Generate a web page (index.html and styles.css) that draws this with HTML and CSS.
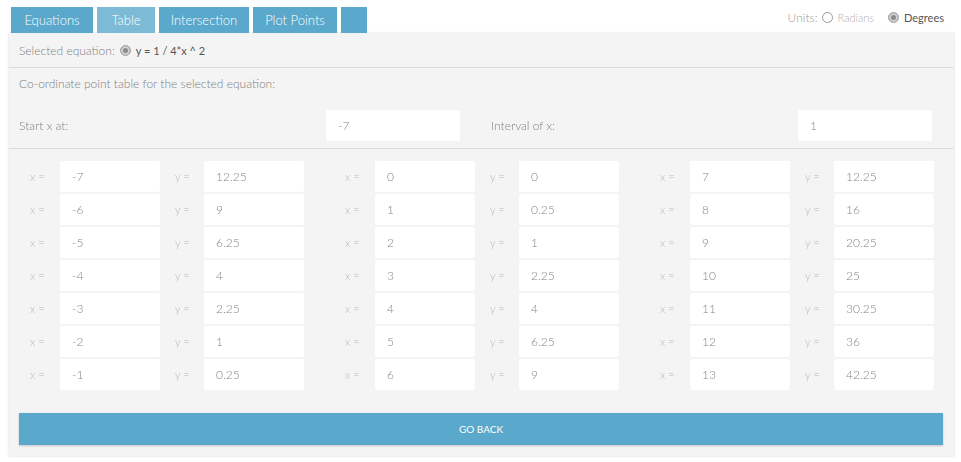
FILE: index.html
```html
<!DOCTYPE html>
<html>
<head>
<meta charset="utf-8">
<link rel="stylesheet" href="styles.css">
</head>
<body>
<div class="page">
  <div class="topbar">
    <div class="tabs">
      <div class="tab">Equations</div>
      <div class="tab active">Table</div>
      <div class="tab">Intersection</div>
      <div class="tab">Plot Points</div>
      <div class="tab blank"></div>
    </div>
    <div class="units">
      <span class="units-label">Units:</span>
      <span class="radio"></span><span class="opt">Radians</span>
      <span class="radio checked"></span><span class="opt sel">Degrees</span>
    </div>
  </div>
  <div class="panel">
    <div class="section eq-row">
      <span class="muted">Selected equation:</span>
      <span class="radio checked"></span>
      <span class="eq">y = 1 / 4*x ^ 2</span>
    </div>
    <div class="section settings">
      <div class="caption">Co-ordinate point table for the selected equation:</div>
      <div class="halves">
        <div class="half first">
          <span class="muted">Start x at:</span>
          <div class="field wide">-7</div>
        </div>
        <div class="half second">
          <span class="muted">Interval of x:</span>
          <div class="field wide">1</div>
        </div>
      </div>
    </div>
    <div class="section points">
      <div class="grid">
        <div class="col">
          <div class="pair"><span class="lbl">x =</span><div class="field">-7</div><span class="lbl y">y =</span><div class="field">12.25</div></div>
          <div class="pair"><span class="lbl">x =</span><div class="field">-6</div><span class="lbl y">y =</span><div class="field">9</div></div>
          <div class="pair"><span class="lbl">x =</span><div class="field">-5</div><span class="lbl y">y =</span><div class="field">6.25</div></div>
          <div class="pair"><span class="lbl">x =</span><div class="field">-4</div><span class="lbl y">y =</span><div class="field">4</div></div>
          <div class="pair"><span class="lbl">x =</span><div class="field">-3</div><span class="lbl y">y =</span><div class="field">2.25</div></div>
          <div class="pair"><span class="lbl">x =</span><div class="field">-2</div><span class="lbl y">y =</span><div class="field">1</div></div>
          <div class="pair"><span class="lbl">x =</span><div class="field">-1</div><span class="lbl y">y =</span><div class="field">0.25</div></div>
        </div>
        <div class="col">
          <div class="pair"><span class="lbl">x =</span><div class="field">0</div><span class="lbl y">y =</span><div class="field">0</div></div>
          <div class="pair"><span class="lbl">x =</span><div class="field">1</div><span class="lbl y">y =</span><div class="field">0.25</div></div>
          <div class="pair"><span class="lbl">x =</span><div class="field">2</div><span class="lbl y">y =</span><div class="field">1</div></div>
          <div class="pair"><span class="lbl">x =</span><div class="field">3</div><span class="lbl y">y =</span><div class="field">2.25</div></div>
          <div class="pair"><span class="lbl">x =</span><div class="field">4</div><span class="lbl y">y =</span><div class="field">4</div></div>
          <div class="pair"><span class="lbl">x =</span><div class="field">5</div><span class="lbl y">y =</span><div class="field">6.25</div></div>
          <div class="pair"><span class="lbl">x =</span><div class="field">6</div><span class="lbl y">y =</span><div class="field">9</div></div>
        </div>
        <div class="col">
          <div class="pair"><span class="lbl">x =</span><div class="field">7</div><span class="lbl y">y =</span><div class="field">12.25</div></div>
          <div class="pair"><span class="lbl">x =</span><div class="field">8</div><span class="lbl y">y =</span><div class="field">16</div></div>
          <div class="pair"><span class="lbl">x =</span><div class="field">9</div><span class="lbl y">y =</span><div class="field">20.25</div></div>
          <div class="pair"><span class="lbl">x =</span><div class="field">10</div><span class="lbl y">y =</span><div class="field">25</div></div>
          <div class="pair"><span class="lbl">x =</span><div class="field">11</div><span class="lbl y">y =</span><div class="field">30.25</div></div>
          <div class="pair"><span class="lbl">x =</span><div class="field">12</div><span class="lbl y">y =</span><div class="field">36</div></div>
          <div class="pair"><span class="lbl">x =</span><div class="field">13</div><span class="lbl y">y =</span><div class="field">42.25</div></div>
        </div>
      </div>
      <div class="btn">GO BACK</div>
    </div>
  </div>
</div>
</body>
</html>
```

FILE: styles.css
```css
* { box-sizing: border-box; }
html, body { margin: 0; padding: 0; background: #ffffff; }
body {
  font-family: Lato, "Liberation Sans", sans-serif;
  font-weight: 300;
  font-size: 12px;
  color: #8a8a8a;
}
.page {
  width: 961px;
  height: 462px;
  padding: 7px 7px 0 9px;
}
.topbar {
  display: flex;
  justify-content: space-between;
  align-items: flex-start;
  height: 26px;
}
.tabs {
  display: flex;
  gap: 4px;
  padding-left: 2px;
}
.tab {
  height: 26px;
  line-height: 26px;
  background: #5aa8cb;
  color: #ffffff;
  font-weight: 300;
  font-size: 13px;
  text-align: center;
}
.tab:nth-child(1) { width: 82px; }
.tab:nth-child(2) { width: 58px; }
.tab:nth-child(3) { width: 90px; }
.tab:nth-child(4) { width: 84px; }
.tab.blank { width: 26px; }
.tab.active { background: #7dbad6; }

.units {
  display: flex;
  align-items: center;
  height: 20px;
  font-size: 11px;
  padding-right: 10px;
}
.units-label { color: #9a9a9a; margin-right: 4px; font-size: 12px; }
.opt { color: #b0b0b0; margin-left: 5px; margin-right: 14px; }
.opt.sel { color: #555555; margin-right: 0; font-weight: 400; }

.radio {
  display: inline-block;
  width: 11px;
  height: 11px;
  border-radius: 50%;
  border: 1px solid #9a9a9a;
  background: #ffffff;
}
.radio.checked {
  background: #8c8c8c;
  box-shadow: inset 0 0 0 2px #d0d0d0;
  border-color: #a8a8a8;
}

.panel {
  width: 945px;
  background: #f4f4f4;
  box-shadow: 0 0 2px rgba(0, 0, 0, 0.18);
}
.section { border-bottom: 1px solid #dddddd; padding: 0 10px; }
.section:last-child { border-bottom: none; }

.eq-row {
  height: 35px;
  display: flex;
  align-items: center;
  gap: 4px;
}
.muted { color: #808080; font-size: 12px; }
.eq { color: #555555; font-size: 11px; font-weight: 400; margin-left: 1px; }
.eq-row .radio { margin-left: 1px; }

.settings { height: 81px; padding-top: 9px; }
.caption { line-height: 14px; color: #808080; }
.halves {
  display: flex;
  margin-top: 19px;
  filter: grayscale(1);
}
.half {
  display: flex;
  align-items: center;
  justify-content: space-between;
}
.half.first { width: 472px; flex-shrink: 0; padding-right: 31px; }
.half.second { flex: 1; padding-right: 12px; }
.field {
  background: #ffffff;
  height: 31px;
  line-height: 31px;
  padding-left: 12px;
  color: #858585;
  font-size: 12px;
  border-radius: 2px;
}
.field.wide { width: 134px; }

.points { padding: 12px 10px 11px 6px; }
.grid {
  display: grid;
  grid-template-columns: repeat(3, 315px);
  filter: grayscale(1);
}
.col { display: flex; flex-direction: column; gap: 2px; padding-left: 15px; }
.pair {
  display: flex;
  align-items: center;
  height: 31px;
}
.pair .field { width: 100px; }
.lbl { width: 30px; color: #b8b8b8; font-size: 11px; padding-left: 0; }
.lbl.y { margin-left: 15px; width: 29px; }

.btn {
  margin-top: 23px;
  margin-left: 4px;
  margin-right: 1px;
  height: 32px;
  line-height: 32px;
  background: #5aa8cb;
  color: #ffffff;
  text-align: center;
  font-size: 10px;
  font-weight: 400;
  box-shadow: 0 1px 2px rgba(0, 0, 0, 0.2);
}
```
